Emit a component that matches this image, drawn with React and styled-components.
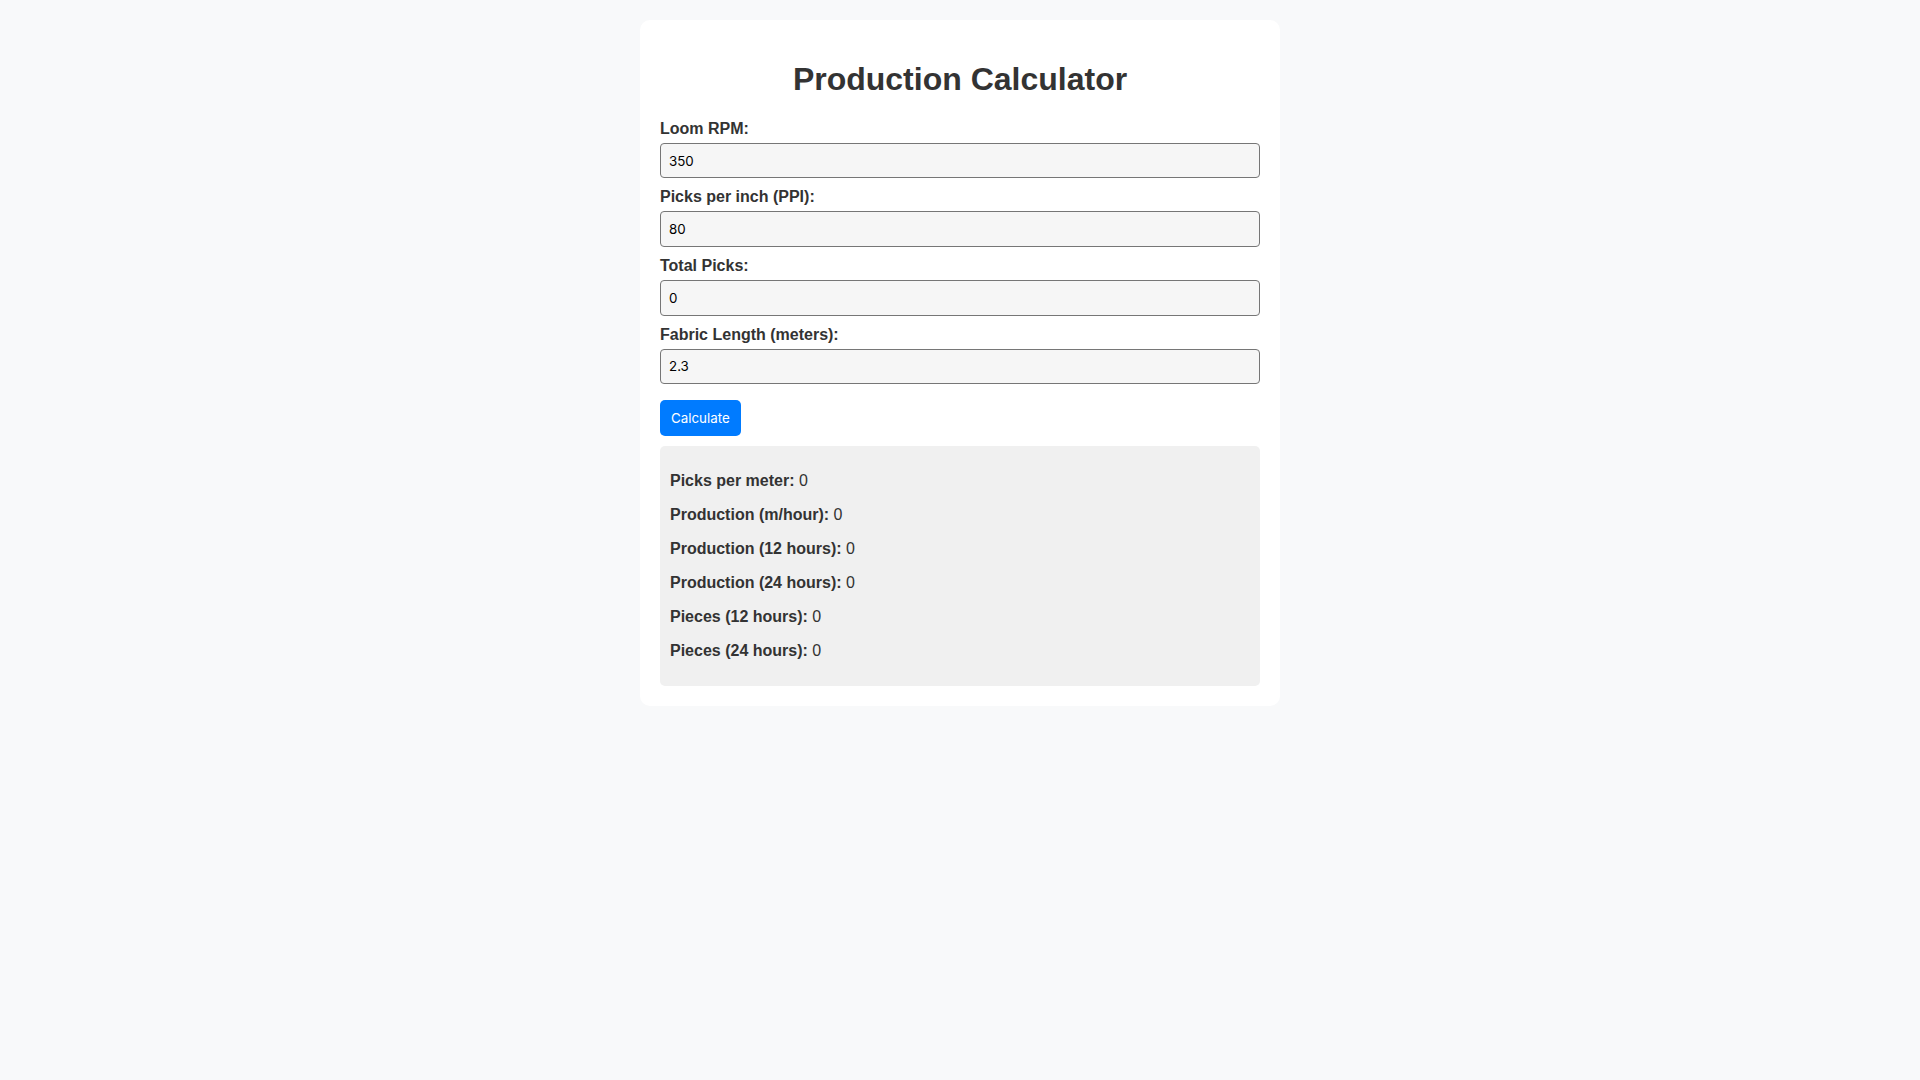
import React, { useState } from "react";
import styled, { createGlobalStyle } from "styled-components";

const GlobalStyle = createGlobalStyle`
  body {
    margin: 0;
    padding: 20px;
    background: #f8f9fa;
    font-family: "Liberation Sans", Arial, sans-serif;
    color: #333;
  }
`;

const Card = styled.div`
  max-width: 600px;
  margin: 0 auto;
  padding: 20px;
  background: #fff;
  border-radius: 10px;
`;

const Title = styled.h1`
  text-align: center;
  font-size: 32px;
  margin: 21.44px 0;
`;

const Field = styled.div`
  display: flex;
  flex-direction: column;
`;

const Label = styled.label`
  font-weight: bold;
  margin-bottom: 5px;
`;

const Input = styled.input`
  width: 100%;
  box-sizing: border-box;
  height: 35.6px;
  padding: 8px;
  margin-bottom: 10px;
  border: 1px solid #767676;
  border-radius: 4px;
  background: #f6f6f6;
  color: #000;
  font-family: Inter, "Noto Sans", sans-serif;
  font-size: 13.33px;
`;

const Button = styled.button`
  align-self: flex-start;
  margin-top: 6px;
  padding: 10px 11px;
  line-height: 16px;
  background: #007bff;
  color: #fff;
  border: none;
  border-radius: 5px;
  font-family: Inter, "Noto Sans", sans-serif;
  font-size: 13.33px;
  cursor: pointer;
`;

const Results = styled.div`
  margin-top: 10px;
  padding: 10px;
  background: #f0f0f0;
  border-radius: 5px;
`;

const Row = styled.p`
  margin: 16px 0;
`;

const fields = [
  ["rpm", "Loom RPM:", "350"],
  ["ppi", "Picks per inch (PPI):", "80"],
  ["total", "Total Picks:", "0"],
  ["length", "Fabric Length (meters):", "2.3"],
];

const rows = [
  "Picks per meter:",
  "Production (m/hour):",
  "Production (12 hours):",
  "Production (24 hours):",
  "Pieces (12 hours):",
  "Pieces (24 hours):",
];

export default function App() {
  const [values, setValues] = useState(
    Object.fromEntries(fields.map(([k, , v]) => [k, v]))
  );

  return (
    <>
      <GlobalStyle />
      <Card>
        <Title>Production Calculator</Title>
        {fields.map(([key, label]) => (
          <Field key={key}>
            <Label htmlFor={key}>{label}</Label>
            <Input
              id={key}
              type="number"
              value={values[key]}
              onChange={(e) => setValues({ ...values, [key]: e.target.value })}
            />
          </Field>
        ))}
        <Button>Calculate</Button>
        <Results>
          {rows.map((r) => (
            <Row key={r}>
              <strong>{r}</strong> 0
            </Row>
          ))}
        </Results>
      </Card>
    </>
  );
}
